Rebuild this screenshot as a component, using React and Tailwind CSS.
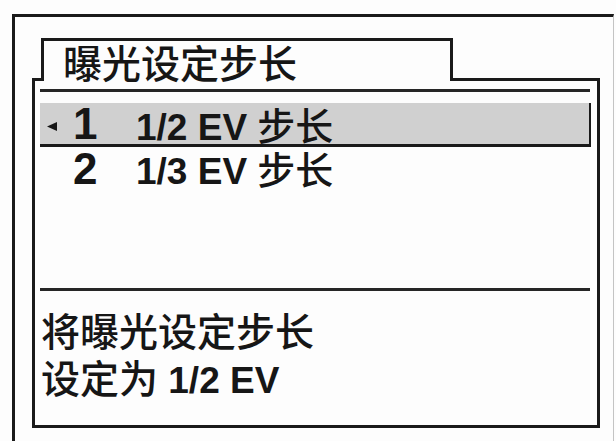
export default function App() {
  const cjk = "font-['Noto_Sans_CJK_SC',sans-serif] font-medium";
  const lat = "font-['Liberation_Sans','Noto_Sans_CJK_SC',sans-serif] font-bold";
  return (
    <div className="w-[616px] h-[441px] bg-[#fdfdfd] overflow-hidden text-[#161616]">
      <div className="mt-[14px] ml-[12px] w-[602px] h-[427px] border-t-[3px] border-l-[3px] border-[#1a1a1a] border-r border-r-[#c4c4c4] pt-[21px] pl-[17px] pr-[13px]">
        {/* tab row */}
        <div className="flex h-[43px]">
          <div className="w-[9px] border-b-[3px] border-[#1a1a1a]" />
          <div className="w-[412px] border-t-[3px] border-l-[3px] border-r-[3px] border-[#1a1a1a] pl-[19px] pt-[1px]">
            <div className={`${cjk} text-[39px] leading-[39px] whitespace-nowrap`}>曝光设定步长</div>
          </div>
          <div className="flex-1 border-b-[3px] border-[#1a1a1a]" />
        </div>
        {/* body */}
        <div className="h-[347px] border-l-[3px] border-r-[3px] border-b-[3px] border-[#1a1a1a] pt-[8px]">
          <div className="ml-[5px] mr-[7px] h-[3px] bg-[#262626]" />
          <div className="mt-[11px] ml-[5px] mr-[6px] h-[44px] bg-[#d0d0d0] border-b-[3px] border-r-[2px] border-[#1a1a1a] flex items-start pl-[7px]">
            <svg width="10" height="9" viewBox="0 0 10 9" className="mt-[19px] shrink-0">
              <polygon points="0,4.5 10,0 10,9" fill="#161616" />
            </svg>
            <div className={`${lat} ml-[16px] w-[63px] text-[44px] leading-[41px] shrink-0`}>1</div>
            <div className="mt-[2px] whitespace-nowrap leading-[37px]">
              <span className={`${lat} inline-block text-[37px] leading-[37px]`}>1/2 EV&nbsp;</span>
              <span className={`${cjk} inline-block text-[38px] leading-[37px]`}>步长</span>
            </div>
          </div>
          <div className="ml-[5px] mr-[6px] h-[44px] flex items-start pl-[7px]">
            <div className="w-[10px] shrink-0" />
            <div className={`${lat} ml-[16px] w-[63px] text-[44px] leading-[44px] shrink-0`}>2</div>
            <div className="mt-[2px] whitespace-nowrap leading-[37px]">
              <span className={`${lat} inline-block text-[37px] leading-[37px]`}>1/3 EV&nbsp;</span>
              <span className={`${cjk} inline-block text-[38px] leading-[37px]`}>步长</span>
            </div>
          </div>
          <div className="mt-[97px] ml-[5px] mr-[7px] h-[3px] bg-[#262626]" />
          <div className="mt-[15px] pl-[6px]">
            <div className="leading-[47px] h-[47px] whitespace-nowrap">
              <span className={`${cjk} inline-block text-[39px] leading-[47px]`}>将曝光设定步长</span>
            </div>
            <div className="leading-[47px] h-[47px] whitespace-nowrap">
              <span className={`${cjk} inline-block text-[39px] leading-[47px]`}>设定为</span>
              <span className={`${lat} inline-block text-[37px] leading-[47px]`}>&nbsp;1/2 EV</span>
            </div>
          </div>
        </div>
      </div>
    </div>
  );
}
